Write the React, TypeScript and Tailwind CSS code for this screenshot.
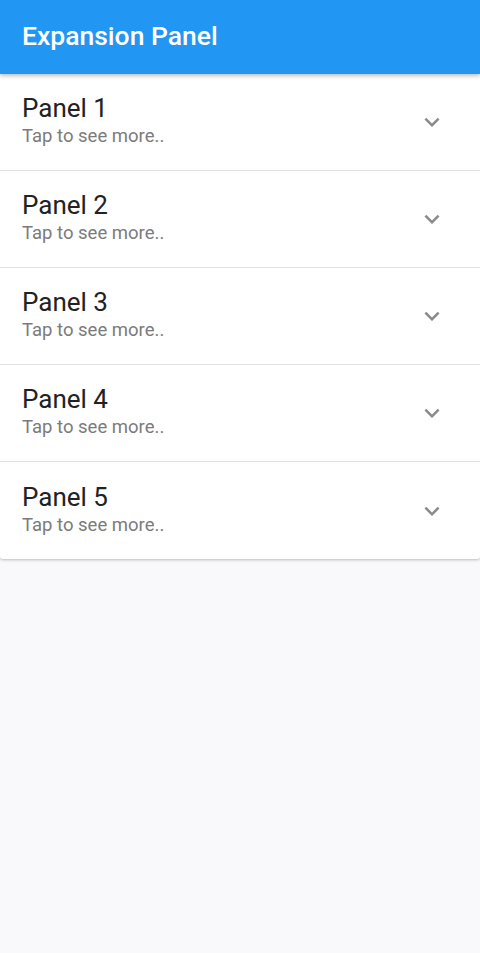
import React from "react";

const panels = [1, 2, 3, 4, 5];

function Chevron() {
  return (
    <svg width="30" height="30" viewBox="0 0 24 24" className="fill-[#8a8a8a]">
      <path d="M16.59 8.59L12 13.17 7.41 8.59 6 10l6 6 6-6z" />
    </svg>
  );
}

export default function App() {
  return (
    <div
      className="min-h-[953px] w-full bg-[#f9f8fa] flex flex-col"
      style={{ fontFamily: "Roboto, 'Noto Sans', sans-serif" }}
    >
      <header className="h-[74px] bg-[#2196f3] flex items-center px-[22px] shadow-[0_2px_4px_rgba(0,0,0,0.25)] relative z-10">
        <h1 className="text-white text-[26.5px] font-medium leading-none -mt-[1px]">
          Expansion Panel
        </h1>
      </header>
      <div className="bg-white rounded-b-[3px] shadow-[0_1px_3px_rgba(0,0,0,0.25)] flex flex-col">
        {panels.map((n, i) => (
          <div
            key={n}
            className={
              "h-[97px] flex items-center justify-between pl-[22px] pr-[33px] " +
              (i < panels.length - 1 ? "border-b border-[#e2e1e3]" : "")
            }
          >
            <div className="flex flex-col gap-[2px] -mt-[4px]">
              <div className="text-[26px] leading-[30px] text-[#222222]">Panel {n}</div>
              <div className="text-[18.5px] leading-[22px] text-[#7b7b7b]">Tap to see more..</div>
            </div>
            <Chevron />
          </div>
        ))}
      </div>
    </div>
  );
}
